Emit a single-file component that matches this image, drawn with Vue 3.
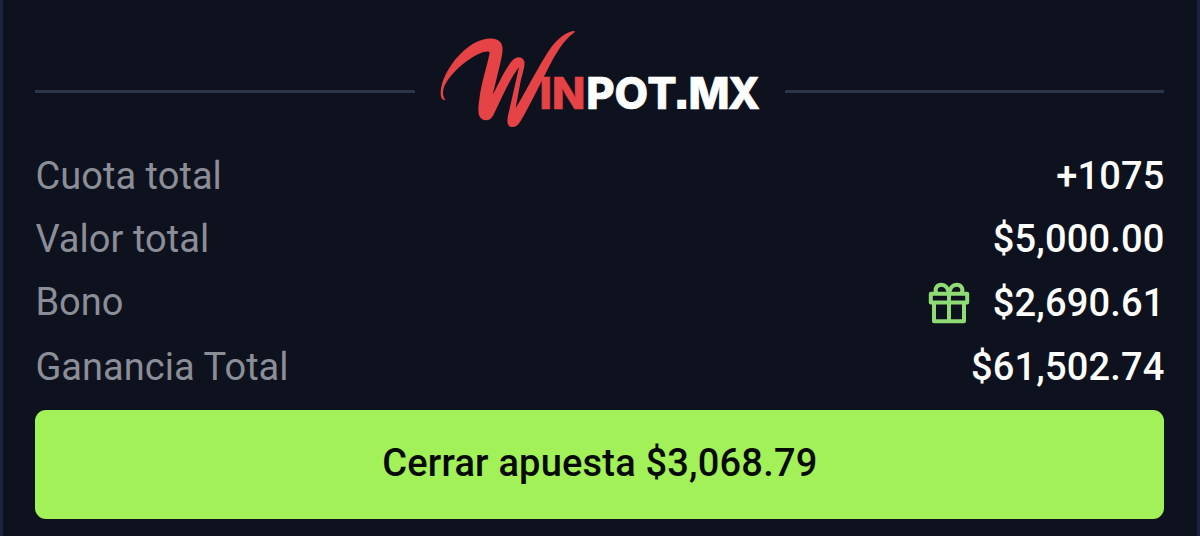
<script setup>
const rows = [
  { label: 'Cuota total', value: '+1075' },
  { label: 'Valor total', value: '$5,000.00' },
  { label: 'Bono', value: '$2,690.61', gift: true },
  { label: 'Ganancia Total', value: '$61,502.74' },
]
</script>

<template>
  <main class="slip">
    <header class="brand">
      <span class="rule"></span>
      <svg class="logo" viewBox="0 0 330 112" aria-label="Winpot.mx">
        <g transform="translate(-15 0) scale(.33333)">
          <path
            fill="#e54345"
            d="M73 240C61 238 60 218 64 201C75 151 116 97 162 70C190 54 224 49 240 65C252 79 248 99 241 130L218 224C236 193 257 140 281 118C292 107 309 111 313 124C316 135 307 162 302 183L287 264C316 218 347 155 376 109C400 66 434 37 459 33Q470 33 461 39C430 62 409 98 387 140C357 198 329 257 302 303C294 317 285 322 275 321C260 319 261 304 264 287L297 142C270 174 237 253 219 287C211 302 197 304 185 297C171 286 175 261 178 238C183 190 201 141 209 98C207 91 187 96 174 103C127 126 75 178 70 211C67 222 71 233 76 239Q75 241 73 240Z"
          />
        </g>
        <g class="wordmark">
          <text class="red" y="89" x="104.4 117">IN</text>
          <text y="89" x="151.2 179.6 212.2">POT<tspan class="dot" x="240" y="88.4">.</tspan><tspan x="253.4" y="89">M</tspan></text>
          <text y="89" x="293" textLength="32" lengthAdjust="spacingAndGlyphs">X</text>
        </g>
      </svg>
      <span class="rule"></span>
    </header>

    <dl class="rows">
      <div v-for="row in rows" :key="row.label" class="row" :class="{ bonus: row.gift }">
        <dt>{{ row.label }}</dt>
        <dd>
          <svg v-if="row.gift" class="gift" viewBox="0 0 42 42" fill="none" stroke="#8fdb76" stroke-width="4" stroke-linejoin="round">
            <path d="M2.8 11.8H39.2V20.5H2.8ZM6 20.5V39.2H36V20.5M21 11.8V39.2" />
            <path d="M21 11.8C20 6 17 2.8 13.5 2.8C8 2.8 6 8 9 11.8M21 11.8C22 6 25 2.8 28.5 2.8C34 2.8 36 8 33 11.8" />
          </svg>
          <span>{{ row.value }}</span>
        </dd>
      </div>
    </dl>

    <button class="cashout">Cerrar apuesta $3,068.79</button>
  </main>
</template>

<style>
body {
  margin: 0;
  background: #0e121e;
}
</style>

<style scoped>
.slip {
  box-sizing: border-box;
  width: 1200px;
  height: 536px;
  padding: 20px 32.6px 0 32.4px;
  border-left: 3px solid #1c2440;
  border-right: 3px solid #1c2040;
  background: #0e121e;
  font-family: Roboto, sans-serif;
  overflow: hidden;
}

.brand {
  display: flex;
  align-items: flex-start;
  height: 124px;
}

.rule {
  flex: 1;
  height: 3px;
  margin-top: 70px;
  background: #2d3648;
}

.logo {
  width: 330px;
  height: 112px;
  margin: 0 20px;
  flex: none;
  overflow: visible;
}

.wordmark {
  font: 800 43.5px Inter, sans-serif;
  fill: #fff;
  stroke: #fff;
  stroke-width: 0.7px;
}

.wordmark .red {
  fill: #e54345;
  stroke: #e54345;
}

.dot {
  font: 700 48px "Liberation Sans", sans-serif;
  stroke-width: 2px;
}

.rows {
  margin: 0;
  height: 266px;
}

.row {
  display: flex;
  justify-content: space-between;
  height: 63.5px;
  line-height: 64px;
  font-size: 38px;
}

dt {
  color: #8c8e97;
  letter-spacing: 0.05px;
}

.row:nth-child(2) dt,
.bonus dt {
  margin-top: -1px;
}

dd {
  display: flex;
  align-items: center;
  margin: 0;
  color: #fff;
  font-weight: 500;
  letter-spacing: 0.15px;
}

.row:last-child dd {
  margin-top: 1px;
}

.gift {
  width: 42px;
  height: 42px;
  margin-right: 22.5px;
}

.cashout {
  display: block;
  width: 100%;
  height: 109px;
  padding: 0 0 4px;
  border: 0;
  border-radius: 11px;
  background: #a2f158;
  color: #060a05;
  font: 500 38px Roboto, sans-serif;
  letter-spacing: 0.2px;
}
</style>
